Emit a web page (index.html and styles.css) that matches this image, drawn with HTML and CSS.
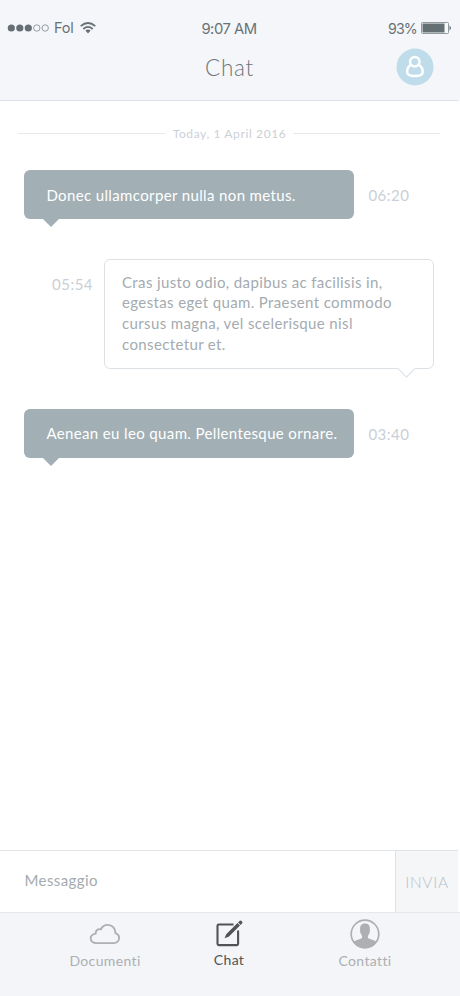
FILE: index.html
```html
<!DOCTYPE html>
<html lang="it">
<head>
<meta charset="utf-8">
<title>Chat</title>
<link rel="stylesheet" href="styles.css">
</head>
<body>
<div class="screen">
  <header class="header">
    <div class="status">
      <div class="carrier">
        <svg class="signal" width="42" height="8" viewBox="0 0 42 8"><g fill="#667074"><circle cx="4.300" cy="4" r="3.6"/><circle cx="12.800" cy="4" r="3.6"/><circle cx="21.300" cy="4" r="3.6"/></g><g fill="none" stroke="#7d878b" stroke-width=".8"><circle cx="29.800" cy="4" r="3.2"/><circle cx="38.200" cy="4" r="3.2"/></g></svg>
        <span class="network">Fol</span>
        <svg class="wifi" width="16" height="12" viewBox="0 0 16 12"><g fill="none" stroke="#667074" stroke-width="1.7"><path d="M.7 4.2Q8-2.2 15.3 4.2"/><path d="M3.3 7Q8 2.9 12.7 7"/></g><path d="M5.4 8.6Q8 6.5 10.6 8.6L8 11.4Z" fill="#667074"/></svg>
      </div>
      <span class="clock">9:07 AM</span>
      <div class="power"><span>93%</span>
        <svg width="31" height="12" viewBox="0 0 31 12"><rect x=".5" y=".5" width="27" height="11" rx="1" fill="#f7f9f9" stroke="#879195" stroke-width=".9"/><path d="M1.500 1.500h22v9h-22z" fill="#657075"/><path d="M28.500 3.500q3 2.500 0 5z" fill="#657075"/></svg>
      </div>
    </div>
    <div class="titlebar">
      <h1>Chat</h1>
      <svg class="avatar" width="38" height="38" viewBox="0 0 38 38"><circle cx="19" cy="19" r="18.5" fill="#bfdcea"/><g fill="none" stroke="#fff" stroke-width="2.500"><circle cx="18.800" cy="13.800" r="4.700"/><path d="M14.900 16.700C12.200 18.500 10.900 21.500 11.200 24.600c.3 2.500 2.700 3.300 7.700 3.300s7.400-.8 7.700-3.300c.3-3.100-1-6.100-3.900-7.900"/></g></svg>
    </div>
  </header>
  <main class="messages">
    <div class="date"><span>Today, 1 April 2016</span></div>
    <div class="row incoming first"><p class="bubble filled">Donec ullamcorper nulla non metus.</p><time>06:20</time></div>
    <div class="row outgoing"><time>05:54</time><p class="bubble outlined">Cras justo odio, dapibus ac facilisis in,<br>egestas eget quam. Praesent commodo<br>cursus magna, vel scelerisque nisl<br>consectetur et.</p></div>
    <div class="row incoming"><p class="bubble filled">Aenean eu leo quam. Pellentesque ornare.</p><time>03:40</time></div>
  </main>
  <div class="composer"><div class="input">Messaggio</div><div class="send">INVIA</div></div>
  <nav class="tabs">
    <div class="tab documents">
      <svg width="32" height="32" viewBox="0 0 32 32"><path d="M7.300 25.100h17.300c3.300 0 5.500-2.100 5.500-5.100 0-2.600-1.600-4.200-3.600-4.900-.2-4.800-3.300-8.200-7.700-8.200-3.200 0-5.700 1.700-6.900 4.400-3.200-.7-5.400 1.200-5.200 4.300-3.100.5-5 2.300-5 4.700 0 2.900 2.300 4.800 5.600 4.800z" fill="none" stroke="#adafb2" stroke-width="1.900" stroke-linejoin="round"/></svg>
      <span>Documenti</span>
    </div>
    <div class="tab active">
      <svg width="32" height="32" viewBox="0 0 32 32"><path d="M20.500 6.500H5.800q-1.300 0-1.300 1.300v18q0 1.300 1.300 1.300h18q1.300 0 1.300-1.300V12.500" fill="none" stroke="#525357" stroke-width="2.100"/><path d="M13.200 16.300L24.500 5l2.500 2.500-11.300 11.300-4.200 1.500zM25.100 4.400l1.400-1.400q1-1 2 0l.5.500q1 1 0 2l-1.400 1.400z" fill="#525357"/></svg>
      <span>Chat</span>
    </div>
    <div class="tab contacts">
      <svg width="32" height="32" viewBox="0 0 32 32"><circle cx="16" cy="16" r="13.800" fill="none" stroke="#adafb2" stroke-width="1.700"/><path d="M4.500 23.800c1.600-1.500 5.700-1.900 7.700-3.200 1.200-.8 1.200-2.200.6-3.400-1.200-1.300-1.700-3.100-1.700-5-.2-4.500 1.100-6.700 4.900-6.700s5.100 2.200 4.900 6.700c0 1.900-.5 3.700-1.700 5-.6 1.200-.6 2.600.6 3.400 2 1.300 6.100 1.700 7.700 3.200-2.200 3.900-6.300 6-11.500 6s-9.300-2.100-11.500-6z" fill="#adafb2"/></svg>
      <span>Contatti</span>
    </div>
  </nav>
</div>
</body>
</html>
```

FILE: styles.css
```css
* { box-sizing: border-box; }
body { margin: 0; background: #fff; font-family: Lato, sans-serif; }
.screen { width: 460px; height: 996px; display: flex; flex-direction: column; overflow: hidden; background: linear-gradient(#f4f6f9 0 100px, #fff 100px); }
.header { width: 459px; height: 101px; flex: none; background: #f4f6f9; border-bottom: 1px solid #dce2e7; }
.status { display: grid; grid-template-columns: 1fr auto 1fr; align-items: center; height: 37px; padding: 21px 7px 0; color: #687276; font: 14.800px/16px Inter, sans-serif; letter-spacing: -.5px; }
.clock { margin-left: -1px; }
.carrier, .power svg { position: relative; top: -1px; }
.carrier, .power { display: flex; align-items: center; }
.network { margin-left: 5px; font-size: 14.500px; letter-spacing: -.2px; }
.wifi { margin-left: 6px; }
.power { justify-content: flex-end; gap: 4px; font-size: 14.200px; letter-spacing: -.8px; }
.titlebar { display: grid; grid-template-columns: 1fr auto 1fr; align-items: center; height: 60px; padding: 0 25px; }
.titlebar h1 { grid-column: 2; margin: 2px 0 0; font-size: 22.500px; line-height: 28px; font-weight: 300; letter-spacing: .7px; color: #707579; }
.avatar { justify-self: end; }
.messages { flex: 1; padding-top: 24px; }
.date { display: flex; align-items: center; gap: 7px; margin: 0 20px 0 18px; height: 16px; color: #cbd0d7; font-size: 12px; letter-spacing: .62px; white-space: nowrap; }
.date span { margin-left: 1px; }
.date::before, .date::after { content: ""; flex: 1; height: 1px; background: #e6e9eb; }
.row { display: flex; letter-spacing: .37px; }
.row.first { margin-top: 29px; }
.incoming { align-items: center; padding-left: 24.400px; gap: 14px; }
.outgoing { margin: 40px 26px 40px 52px; justify-content: space-between; }
.bubble { position: relative; margin: 0; font-size: 15px; border-radius: 6px; white-space: nowrap; }
.filled { width: 330px; height: 49px; padding: 0 22px; line-height: 49px; background: #a2afb5; color: #fff; }
.first .filled { line-height: 50px; }
.filled::after { content: ""; position: absolute; left: 18px; top: 48px; border: 9px solid transparent; border-top-color: #a2afb5; border-bottom: 0; }
.outlined { width: 330px; height: 110px; padding: 11.500px 17px; border: 1px solid #dce1e5; line-height: 20.800px; color: #a4abb0; }
.outlined::after { content: ""; position: absolute; right: 20px; bottom: -7px; width: 12px; height: 12px; background: #fff; border: solid #dce1e5; border-width: 0 1px 1px 0; transform: rotate(45deg); }
time { margin-top: 1px; font-size: 15px; color: #c9cfd6; letter-spacing: .5px; }
.outgoing time { margin-top: 16px; }
.composer { display: flex; width: 458px; height: 62px; flex: none; border-top: 1px solid #dfe4e8; }
.input { flex: 1; padding-left: 24.500px; line-height: 59px; font-size: 15px; letter-spacing: .4px; color: #a4abb0; }
.send { width: 63px; border-left: 1px solid #dce3e8; background: #f4f6f8; text-align: center; line-height: 62px; font-size: 15.500px; font-weight: 300; letter-spacing: .7px; color: #b9c0c8; }
.tabs { height: 84px; flex: none; display: flex; background: #f3f5f8; border-top: 1px solid #e6e9eb; }
.tab { display: flex; flex-direction: column; align-items: center; width: 100px; padding-top: 5px; font-size: 14px; letter-spacing: .36px; color: #adafb2; }
.tab span { line-height: 18px; margin-top: 2px; }
.documents { margin-left: 55px; }
.active { margin-left: 24px; color: #525357; }
.active span { margin-top: 1px; }
.contacts { margin-left: 36px; }
```
